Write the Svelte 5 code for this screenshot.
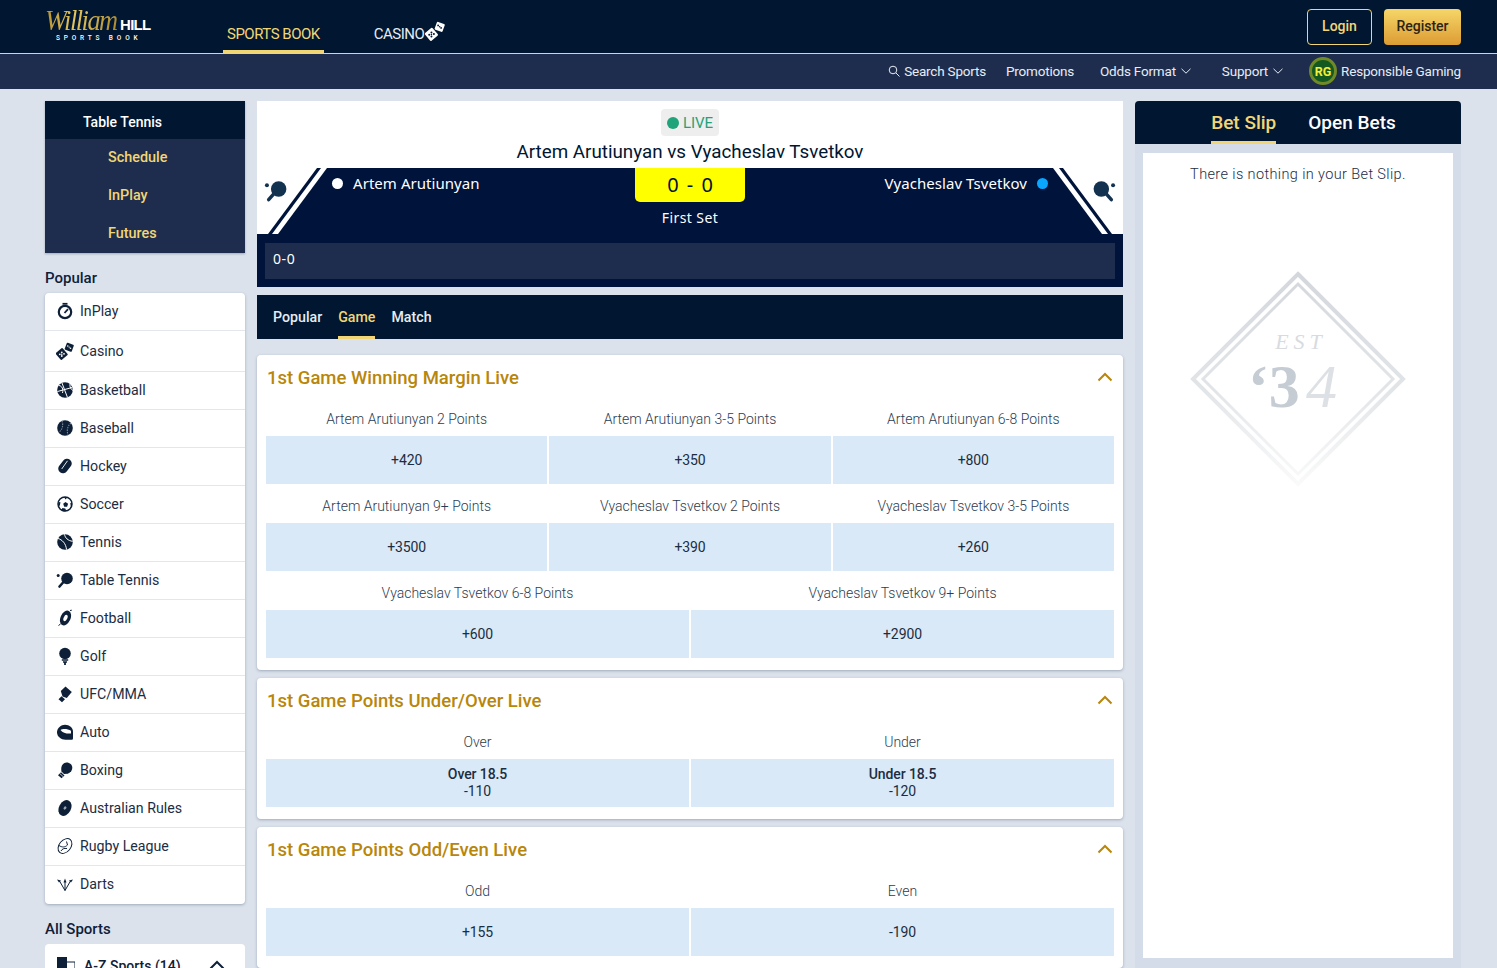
<script>
  const subNav = [
    { label: 'Promotions' },
    { label: 'Odds Format', caret: true },
    { label: 'Support', caret: true }
  ];

  const popular = [
    ['inplay', 'InPlay', 38], ['casino', 'Casino', 41], ['basketball', 'Basketball', 38],
    ['baseball', 'Baseball', 38], ['hockey', 'Hockey', 38], ['soccer', 'Soccer', 38],
    ['tennis', 'Tennis', 38], ['tabletennis', 'Table Tennis', 38], ['football', 'Football', 38],
    ['golf', 'Golf', 38], ['ufc', 'UFC/MMA', 38], ['auto', 'Auto', 38], ['boxing', 'Boxing', 38],
    ['aussie', 'Australian Rules', 38], ['rugby', 'Rugby League', 38], ['darts', 'Darts', 38]
  ];

  const markets = [
    {
      title: '1st Game Winning Margin Live',
      rows: [
        [['Artem Arutiunyan 2 Points', '+420'], ['Artem Arutiunyan 3-5 Points', '+350'], ['Artem Arutiunyan 6-8 Points', '+800']],
        [['Artem Arutiunyan 9+ Points', '+3500'], ['Vyacheslav Tsvetkov 2 Points', '+390'], ['Vyacheslav Tsvetkov 3-5 Points', '+260']],
        [['Vyacheslav Tsvetkov 6-8 Points', '+600'], ['Vyacheslav Tsvetkov 9+ Points', '+2900']]
      ]
    },
    {
      title: '1st Game Points Under/Over Live',
      rows: [[['Over', '-110', 'Over 18.5'], ['Under', '-120', 'Under 18.5']]]
    },
    {
      title: '1st Game Points Odd/Even Live',
      rows: [[['Odd', '+155'], ['Even', '-190']]]
    }
  ];
</script>

{#snippet dice(color, pip)}
  <g fill={color}>
    <rect x="1.200" y="7.500" width="9" height="9" rx="1" transform="rotate(-40 5.700 12)" />
    <rect x="9.500" y="1.500" width="7.500" height="7.500" rx="1" transform="rotate(20 13.200 5.200)" />
  </g>
  <g fill={pip}>
    <circle cx="3.800" cy="12.300" r=".9" /><circle cx="5.800" cy="10.300" r=".9" /><circle cx="5.800" cy="14" r=".9" /><circle cx="8" cy="11.800" r=".9" /><circle cx="5.800" cy="12.200" r=".7" />
    <circle cx="11.800" cy="4" r=".8" /><circle cx="14.500" cy="6.200" r=".8" /><circle cx="13.200" cy="5.100" r=".7" />
  </g>
{/snippet}

{#snippet paddle(color)}
  <circle cx="11" cy="7.500" r="5.800" fill={color} />
  <path d="M7.500 11 L3.500 15.500" stroke={color} stroke-width="2.600" stroke-linecap="round" />
  <circle cx="2.200" cy="4.600" r="1.500" fill={color} />
{/snippet}

{#snippet icon(name)}
  <svg class="ico" viewBox="0 0 18 18" aria-hidden="true">
    {#if name === 'inplay'}
      <circle cx="9" cy="10" r="6.200" fill="none" stroke="#0e2038" stroke-width="2.200" />
      <path d="M8.500 11 L12 7.200" stroke="#0e2038" stroke-width="1.800" />
      <path d="M6.500 1.800h5" stroke="#0e2038" stroke-width="1.800" />
    {:else if name === 'casino'}
      {@render dice('#0e2038', '#fff')}
    {:else if name === 'basketball'}
      <circle cx="9" cy="9" r="7.800" fill="#0e2038" />
      <path d="M1.500 10.500 L16 6.500 M6 2 L11.500 16.500 M3 4.500c3 .5 4.500 3.500 3.500 7.500M14 3c-.5 3 1 5.500 3 6.500" fill="none" stroke="#fff" stroke-width="1" />
    {:else if name === 'baseball'}
      <circle cx="9" cy="9" r="7.800" fill="#0e2038" />
      <path d="M6 2c1.500 4 .5 9-3.500 11.500M15 4c-3.500 3-4.500 7-3 12" fill="none" stroke="#7d8a9c" stroke-width="1.100" stroke-dasharray="1.500 1" />
    {:else if name === 'hockey'}
      <rect x="4.300" y="1" width="9.400" height="16" rx="4.700" transform="rotate(38 9 9)" fill="#0e2038" />
      <path d="M5.700 12 L11.500 3.800" stroke="#fff" stroke-width=".9" />
    {:else if name === 'soccer'}
      <circle cx="9" cy="9" r="7" fill="none" stroke="#0e2038" stroke-width="1.500" />
      <path d="M9.500 7l2.600 1.700-1 3H8.200l-1-3zM8 2l3.500.2L9.500 4.500zM2.500 7l2 .3-.8 3.700-1.500-1zM15.800 7l-1.500 1.200.5 3 1.200-1.500zM5.500 15.500l.8-2.500 3 .5 1 2.500-2.500.5z" fill="#0e2038" />
    {:else if name === 'tennis'}
      <circle cx="9" cy="9" r="7.800" fill="#0e2038" />
      <path d="M2 5.500c4 1 8 5 8.500 11M8.500 1.300c.5 3.500 3.500 6.500 8.200 7" fill="none" stroke="#fff" stroke-width="1" />
    {:else if name === 'tabletennis'}
      {@render paddle('#0e2038')}
    {:else if name === 'football'}
      <ellipse cx="9.500" cy="9" rx="5" ry="7.800" transform="rotate(25 9.500 9)" fill="#0e2038" />
      <ellipse cx="9.500" cy="9" rx="1.800" ry="3.300" transform="rotate(25 9.500 9)" fill="#fff" />
      <path d="M2.500 16.500l2-1.500M14 1.500l1.800-.3" stroke="#0e2038" stroke-width="1" />
    {:else if name === 'golf'}
      <circle cx="9" cy="6.500" r="5.800" fill="#0e2038" />
      <path d="M5.800 13h6.400M7 15h4" stroke="#0e2038" stroke-width="1.400" />
      <path d="M9 15v3" stroke="#0e2038" stroke-width="1.800" />
    {:else if name === 'ufc'}
      <path d="M9.500 1.500 L15.800 7 L10.800 13 L6.500 11.500 L4.800 6Z" fill="#0e2038" />
      <path d="M5.500 11.300 L9 14.300 L6 17.300 L2.500 14.300Z" fill="#0e2038" />
    {:else if name === 'auto'}
      <path d="M9 1.800c4.500 0 8 3 8 7v6.500c0 1-.6 1.500-1.500 1.500H9.500C5 16.800 1 13.500 1 9.300 1 5 5 1.800 9 1.800z" fill="#0e2038" />
      <path d="M4.500 7c2-1.500 7-1.500 10.500.8v2.700c-4 .3-8 0-10.500-3.500z" fill="#fff" />
    {:else if name === 'boxing'}
      <path d="M10.500 1.500c3.500 0 5.800 2.300 5.800 5.300 0 2.500-1.500 4.500-4.500 6L8 13 5.500 10.500C4.500 6.500 6 1.800 10.500 1.500z" fill="#0e2038" />
      <path d="M5 11.300 L8.500 14.500 L5.500 17.300 L2 14.300Z" fill="#0e2038" />
      <path d="M4 12.800 L7 15.500" stroke="#fff" stroke-width=".7" />
    {:else if name === 'aussie'}
      <ellipse cx="9" cy="9" rx="6" ry="8.300" transform="rotate(28 9 9)" fill="#0e2038" />
      <ellipse cx="9" cy="9" rx="1.700" ry="1.300" transform="rotate(-50 9 9)" fill="#9aa5b3" />
    {:else if name === 'rugby'}
      <ellipse cx="9" cy="9" rx="5.800" ry="8.300" transform="rotate(40 9 9)" fill="none" stroke="#0e2038" stroke-width="1" />
      <path d="M3 8.500c3 2 6 2 8.500-.5M11.500 8l-1-3.500M5 14c1-2 3-3 6-2.500" fill="none" stroke="#0e2038" stroke-width="1" />
    {:else if name === 'darts'}
      <path d="M9 15.500V7M9 15.500L3.500 6M9 15.500L14.500 6" fill="none" stroke="#0e2038" stroke-width="1" />
      <path d="M1 4.500l4 1-2 2zM17 4.500l-4 1 2 2zM9 3.500l1.500 4h-3z" fill="#0e2038" />
    {/if}
  </svg>
{/snippet}

{#snippet chevron()}
  <svg class="chev" viewBox="0 0 16 10" aria-hidden="true"><path d="M1.500 8.500 L8 2 L14.500 8.500" fill="none" stroke="currentColor" stroke-width="2" /></svg>
{/snippet}

{#snippet caret()}
  <svg class="caret" viewBox="0 0 10 6" aria-hidden="true"><path d="M.5 .8 L5 5.200 L9.500 .8" fill="none" stroke="currentColor" stroke-width="1" /></svg>
{/snippet}

<div class="page">
  <header class="top">
    <div class="logo">
      <div class="logo-main"><span class="william">William</span><span class="hill">HILL</span></div>
      <div class="logo-sub">SPORTS BOOK</div>
    </div>
    <nav class="prod">
      <a class="prod-link on" href="#a">SPORTS BOOK</a>
      <a class="prod-link" href="#a">CASINO
        <svg class="prod-dice" viewBox="0 0 18 18" aria-hidden="true">{@render dice('#fff', '#001631')}</svg>
      </a>
    </nav>
    <div class="auth">
      <button class="login">Login</button>
      <button class="register">Register</button>
    </div>
  </header>

  <div class="subnav">
    <a class="search" href="#a">
      <svg viewBox="0 0 12 12" aria-hidden="true"><circle cx="5" cy="5" r="3.800" fill="none" stroke="currentColor" /><path d="M8 8l3.500 3.500" stroke="currentColor" /></svg>
      Search Sports
    </a>
    {#each subNav as item}
      <a class="sublink" class:has-caret={item.caret} href="#a">{item.label}{#if item.caret}{@render caret()}{/if}</a>
    {/each}
    <a class="rg" href="#a">
      <span class="rg-badge">RG</span>
      Responsible Gaming
    </a>
  </div>

  <div class="columns">
    <aside class="side">
      <div class="sport">
        <div class="sport-title">Table Tennis</div>
        <ul class="sport-links">
          <li>Schedule</li>
          <li>InPlay</li>
          <li>Futures</li>
        </ul>
      </div>

      <h3 class="side-head">Popular</h3>
      <ul class="side-list">
        {#each popular as [ico, label, h]}
          <li style="height: {h}px">{@render icon(ico)}<span>{label}</span></li>
        {/each}
      </ul>

      <h3 class="side-head all">All Sports</h3>
      <div class="az">
        <svg class="az-ico" viewBox="0 0 18 18" aria-hidden="true"><rect x="0" y="0" width="10" height="12" fill="#0e2038" /><rect x="8" y="5" width="10" height="11" fill="none" stroke="#0e2038" /></svg>
        <span>A-Z Sports (14)</span>
        {@render chevron()}
      </div>
    </aside>

    <main class="centre">
      <section class="match">
        <div class="match-head">
          <div class="live"><i></i>LIVE</div>
          <h1>Artem Arutiunyan vs Vyacheslav Tsvetkov</h1>
        </div>

        <div class="board">
          <svg class="board-ends" viewBox="0 0 866 66" aria-hidden="true">
            <path d="M60 0 H64 L15 66 H11Z" fill="#00133a" />
            <path d="M806 0 H802 L851 66 H855Z" fill="#00133a" />
          </svg>
          <svg class="bat left" viewBox="0 0 18 18" aria-hidden="true">{@render paddle('#13324f')}</svg>
          <svg class="bat right" viewBox="0 0 18 18" aria-hidden="true">{@render paddle('#13324f')}</svg>
          <div class="board-fill">
            <div class="player"><i class="dot"></i>Artem Arutiunyan</div>
            <div class="score-col">
              <div class="score">0 - 0</div>
              <div class="period">First Set</div>
            </div>
            <div class="player away">Vyacheslav Tsvetkov<i class="dot blue"></i></div>
          </div>
        </div>

        <div class="strip"><div class="strip-bar">0-0</div></div>
      </section>

      <nav class="tabs">
        <a href="#a">Popular</a>
        <a class="on" href="#a">Game</a>
        <a href="#a">Match</a>
      </nav>

      {#each markets as m}
        <section class="market">
          <div class="market-head"><h2>{m.title}</h2>{@render chevron()}</div>
          <div class="market-body">
            {#each m.rows as row}
              <div class="odds-row">
                {#each row as [label, price, line]}
                  <div class="odds-cell">
                    <div class="odds-label">{label}</div>
                    <button class="odds-btn">
                      {#if line}<b>{line}</b>{/if}
                      <span>{price}</span>
                    </button>
                  </div>
                {/each}
              </div>
            {/each}
          </div>
        </section>
      {/each}
    </main>

    <aside class="slip">
      <div class="slip-tabs">
        <a class="on" href="#a">Bet Slip</a>
        <a href="#a">Open Bets</a>
      </div>
      <div class="slip-wrap">
        <div class="slip-body">
          <p>There is nothing in your Bet Slip.</p>
          <svg class="stamp" viewBox="0 0 220 220" aria-hidden="true">
            <defs>
              <linearGradient id="fade" gradientUnits="userSpaceOnUse" x1="0" y1="0" x2="0" y2="220">
                <stop offset="0" stop-color="#d3d7dc" />
                <stop offset=".55" stop-color="#e2e5e8" />
                <stop offset="1" stop-color="#fbfbfb" />
              </linearGradient>
            </defs>
            <path d="M110 5 L215 110 L110 215 L5 110Z" fill="none" stroke="url(#fade)" stroke-width="4" />
            <path d="M110 15 L205 110 L110 205 L15 110Z" fill="none" stroke="url(#fade)" stroke-width="3" />
            <text class="stamp-est" x="113" y="80" text-anchor="middle">EST</text>
            <text class="stamp-34" x="60" y="138">‘3</text>
            <text class="stamp-4" x="118" y="138">4</text>
          </svg>
        </div>
      </div>
    </aside>
  </div>
</div>

<style>
  :global(body) {
    background: #dbe2ec;
  }

  a {
    color: inherit;
    text-decoration: none;
  }

  ul {
    list-style: none;
    margin: 0;
    padding: 0;
  }

  .page {
    height: 968px;
    overflow: hidden;
    font-family: Roboto, "Liberation Sans", sans-serif;
    color: #0e2038;
  }

  .top {
    display: flex;
    align-items: stretch;
    height: 53px;
    padding: 0 36px 0 45px;
    background: #001631;
    border-bottom: 1px solid #f2d675;
  }

  .logo {
    width: 178px;
    padding-top: 5px;
  }

  .logo-main {
    display: flex;
    align-items: baseline;
    height: 29px;
    line-height: 29px;
  }

  .william {
    display: inline-block;
    width: 86px;
    margin-right: -11px;
    font: italic 30px/29px "Liberation Serif", serif;
    letter-spacing: -1.700px;
    white-space: nowrap;
    transform: scaleX(.88);
    transform-origin: left;
    background: linear-gradient(100deg, #b58f2c, #e3c65f 40%, #a98628);
    background-clip: text;
    -webkit-background-clip: text;
    color: transparent;
  }

  .hill {
    font: 700 15px/29px "Liberation Sans", sans-serif;
    color: #fff;
    letter-spacing: -.7px;
  }

  .logo-sub {
    font: 500 6.500px/8px Roboto, sans-serif;
    letter-spacing: 3.850px;
    color: #fff;
    margin-left: 11px;
  }

  .prod {
    display: flex;
    gap: 46px;
    flex: 1;
  }

  .prod-link {
    display: flex;
    align-items: center;
    gap: 1px;
    height: 53px;
    padding: 14px 4px 0;
    box-sizing: border-box;
    font-size: 15px;
    letter-spacing: -.5px;
    color: #e6ecf4;
  }

  .prod-link.on {
    color: #f2d675;
    box-shadow: inset 0 -3px 0 #f2d675;
  }

  .prod-dice {
    width: 20px;
    height: 20px;
    margin-top: -6px;
  }

  .auth {
    display: flex;
    gap: 12px;
    padding-top: 9px;
  }

  .auth button {
    height: 36px;
    padding: 0 0 2px;
    border-radius: 4px;
    font: 500 14px Roboto, sans-serif;
  }

  .login {
    width: 65px;
    background: transparent;
    border: 1px solid #f2d675;
    color: #f2d675;
  }

  .register {
    width: 77px;
    border: 0;
    background: linear-gradient(#f6d668, #dc9c34);
    color: #2c2413;
  }

  .subnav {
    display: flex;
    justify-content: flex-end;
    align-items: center;
    box-sizing: border-box;
    height: 35px;
    padding: 0 36px 1px 0;
    background: #1e2d4d;
    color: #e6ecf4;
    font-size: 13.500px;
    letter-spacing: -.2px;
  }

  .search {
    display: flex;
    align-items: center;
    gap: 4px;
    margin-right: 20px;
  }

  .search svg {
    width: 12px;
    height: 12px;
  }

  .sublink {
    display: flex;
    align-items: center;
    margin-right: 26px;
  }

  .has-caret {
    margin-right: 31px;
  }

  .has-caret:nth-of-type(4) {
    margin-right: 26px;
  }

  .caret {
    width: 10px;
    height: 6px;
    margin-left: 5px;
  }

  .rg {
    display: flex;
    align-items: center;
    gap: 4px;
  }

  .rg-badge {
    display: flex;
    align-items: center;
    justify-content: center;
    width: 28px;
    height: 28px;
    border-radius: 50%;
    background: #14591f;
    border: 3px solid #6f8a26;
    box-sizing: border-box;
    color: #f5ee3a;
    font: 700 12.500px Roboto, sans-serif;
    letter-spacing: 0;
  }

  .columns {
    display: grid;
    grid-template-columns: 200px 866px 326px;
    gap: 12px;
    padding: 12px 36px 0 45px;
  }

  .sport {
    background: #1e2d4d;
    box-shadow: 0 1px 2px rgba(20, 40, 70, .3);
  }

  .sport-title {
    height: 38px;
    padding-left: 38px;
    background: #001631;
    color: #fff;
    font-size: 14px;
    font-weight: 500;
    line-height: 43px;
  }

  .sport-links li {
    height: 38px;
    padding-left: 63px;
    color: #f2d675;
    font-size: 14.400px;
    font-weight: 500;
    line-height: 38px;
  }

  .side-head {
    margin: 16px 0 6px;
    font-size: 15px;
    line-height: 18px;
    font-weight: 500;
    color: #0e2038;
  }

  .side-list {
    background: #fff;
    border-radius: 4px;
    box-shadow: 0 1px 3px rgba(20, 40, 70, .3);
  }

  .side-list li {
    display: flex;
    align-items: center;
    gap: 6px;
    box-sizing: border-box;
    padding: 0 0 1px 11px;
    border-bottom: 1px solid #e3e7ec;
    font-size: 14.200px;
    color: #1c2d42;
  }

  .side-list li:last-child {
    border-bottom: 0;
    padding-bottom: 2px;
  }

  .ico {
    width: 18px;
    height: 18px;
    flex: none;
  }

  .az {
    display: flex;
    align-items: center;
    gap: 9px;
    height: 44px;
    padding: 0 20px 0 12px;
    background: #fff;
    border-radius: 4px;
    font-size: 14px;
    font-weight: 500;
  }

  .az span {
    flex: 1;
  }

  .az-ico {
    width: 18px;
    height: 18px;
  }

  .az .chev {
    color: #0e2038;
  }

  .match-head {
    background: #fff;
    text-align: center;
    height: 67px;
    padding-top: 8px;
    box-sizing: border-box;
  }

  .live {
    display: inline-flex;
    align-items: center;
    gap: 4px;
    height: 27px;
    padding: 0 6px;
    border-radius: 4px;
    background: #eeeeee;
    color: #1fa37a;
    font-size: 15px;
    vertical-align: top;
  }

  .live i {
    width: 12px;
    height: 12px;
    border-radius: 50%;
    background: #1fa37a;
  }

  .match-head h1 {
    margin: 4px 0 0;
    font-size: 18.800px;
    line-height: 24px;
    font-weight: 400;
    color: #001631;
  }

  .board {
    position: relative;
    height: 66px;
    background: #fff;
  }

  .board-ends {
    position: absolute;
    inset: 0;
    width: 100%;
    height: 100%;
  }

  .bat {
    position: absolute;
    top: 11px;
    width: 26px;
    height: 24px;
  }

  .bat.left {
    left: 6px;
  }

  .bat.right {
    right: 6px;
    transform: scaleX(-1);
  }

  .board-fill {
    position: absolute;
    inset: 0;
    display: grid;
    grid-template-columns: 1fr 110px 1fr;
    padding: 0 75px;
    background: #00133a;
    clip-path: polygon(70px 0, 796px 0, 845px 100%, 21px 100%);
    color: #fff;
    font-family: "Noto Sans", sans-serif;
  }

  .player {
    display: flex;
    align-items: center;
    gap: 10px;
    height: 30px;
    font-size: 15px;
    letter-spacing: .05px;
  }

  .away {
    justify-content: flex-end;
  }

  .dot {
    width: 11px;
    height: 11px;
    border-radius: 50%;
    background: #fff;
  }

  .dot.blue {
    background: #0aa5ff;
  }

  .score {
    height: 34px;
    line-height: 34px;
    text-align: center;
    background: #ffff00;
    color: #00133a;
    font-size: 20px;
    word-spacing: 3px;
    border-radius: 0 0 5px 5px;
  }

  .period {
    margin-top: 7px;
    text-align: center;
    font-size: 14px;
    letter-spacing: .4px;
    line-height: 18px;
  }

  .strip {
    padding: 9px 8px 8px;
    background: #00133a;
  }

  .strip-bar {
    height: 36px;
    padding-left: 8px;
    background: #1e2d4d;
    color: #fff;
    font: 14px/32px "Noto Sans", sans-serif;
    letter-spacing: .6px;
  }

  .tabs {
    display: flex;
    gap: 16px;
    height: 44px;
    margin-top: 8px;
    padding-left: 16px;
    background: #001631;
    color: #e6ecf4;
    font-size: 14.200px;
    font-weight: 500;
  }

  .tabs a {
    line-height: 45px;
  }

  .tabs .on {
    color: #f2d675;
    box-shadow: inset 0 -3px 0 #f2d675;
  }

  .market {
    margin: 8px 0 8px;
    background: #fff;
    border-radius: 4px;
    box-shadow: 0 1px 3px rgba(20, 40, 70, .3);
  }

  .tabs + .market {
    margin-top: 16px;
  }

  .market-head {
    display: flex;
    align-items: center;
    justify-content: space-between;
    height: 45px;
    padding: 0 10px;
    color: #b8860b;
  }

  .market-head h2 {
    margin: 0;
    font-size: 18.500px;
    font-weight: 500;
  }

  .chev {
    width: 16px;
    height: 10px;
    margin-top: -2px;
  }

  .market-body {
    display: flex;
    flex-direction: column;
    gap: 3px;
    padding: 0 9px 12px;
  }

  .odds-row {
    display: flex;
    gap: 2px;
  }

  .odds-cell {
    flex: 1;
  }

  .odds-label {
    height: 36px;
    padding-top: 10px;
    box-sizing: border-box;
    text-align: center;
    font-size: 14px;
    line-height: 18px;
    font-weight: 300;
    color: #2c3c50;
  }

  .odds-btn {
    display: flex;
    flex-direction: column;
    align-items: center;
    justify-content: center;
    width: 100%;
    height: 48px;
    padding: 0;
    border: 0;
    background: #d9e9f7;
    color: #1c2d42;
    font: 14px/17px Roboto, sans-serif;
    letter-spacing: -.1px;
  }

  .odds-btn b {
    font-weight: 500;
  }

  .slip-tabs {
    display: flex;
    justify-content: center;
    gap: 32px;
    height: 43px;
    padding-left: 11px;
    background: #001631;
    border-radius: 4px 4px 0 0;
    color: #fff;
    font-size: 19px;
    font-weight: 500;
  }

  .slip-tabs a {
    line-height: 44px;
  }

  .slip-tabs .on {
    color: #f2d675;
    box-shadow: inset 0 -3px 0 #f2d675;
  }

  .slip-wrap {
    padding: 9px 8px 10px;
    background: #d3dce8;
  }

  .slip-body {
    position: relative;
    height: 805px;
    background: #fff;
    text-align: center;
  }

  .slip-body p {
    margin: 0;
    padding-top: 13px;
    font-size: 14.500px;
    letter-spacing: .38px;
    line-height: 18px;
    font-weight: 300;
    color: #1c2d42;
  }

  .stamp {
    position: absolute;
    left: 45px;
    top: 116px;
    width: 220px;
    height: 220px;
  }

  .stamp-est {
    font: italic 22px "Liberation Serif", serif;
    letter-spacing: 5px;
    fill: #d7dbe0;
  }

  .stamp-34 {
    font: 700 62px "Liberation Serif", serif;
    fill: #c6ccd3;
  }

  .stamp-4 {
    font: italic 400 62px "Liberation Serif", serif;
    fill: #dde0e4;
  }
</style>
